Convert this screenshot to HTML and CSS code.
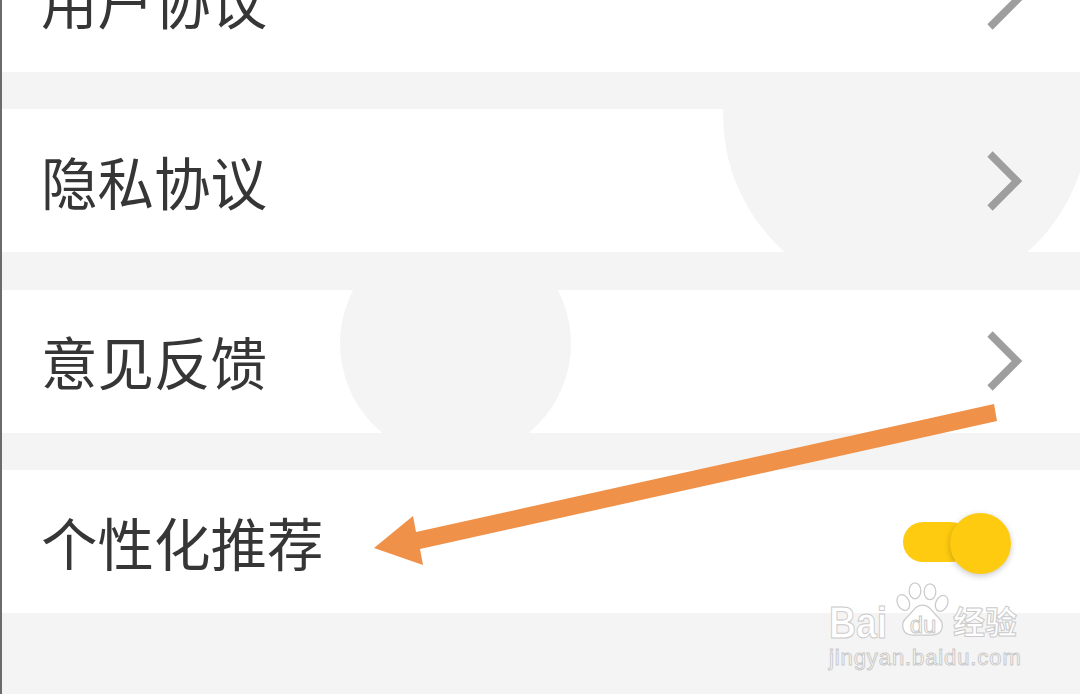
FILE: index.html
```html
<!DOCTYPE html>
<html lang="zh-CN">
<head>
<meta charset="utf-8">
<title>设置</title>
<link rel="stylesheet" href="styles.css">
</head>
<body>
<main class="page">
  <div class="list">
    <section class="row">
      <span class="label">用户协议</span>
      <svg class="chevron" viewBox="0 0 40 60"><path d="M4 3 L31 30 L4 57"/></svg>
    </section>
    <section class="row">
      <i class="blob blob-large"></i>
      <span class="label">隐私协议</span>
      <svg class="chevron" viewBox="0 0 40 60"><path d="M4 3 L31 30 L4 57"/></svg>
    </section>
    <section class="row">
      <i class="blob blob-small"></i>
      <span class="label">意见反馈</span>
      <svg class="chevron" viewBox="0 0 40 60"><path d="M4 3 L31 30 L4 57"/></svg>
    </section>
    <section class="row">
      <span class="label">个性化推荐</span>
      <div class="toggle"><i class="knob"></i></div>
    </section>
  </div>

  <svg class="arrow" viewBox="0 0 1080 694">
    <polygon points="994,404 997,421 420,549 423,565 374,548 413,516 416,532"/>
  </svg>

  <div class="watermark">
    <div class="wm-top">
      <span class="wm-bai">Bai</span>
      <span class="wm-paw">
        <svg viewBox="0 0 66 66">
          <ellipse cx="10" cy="24" rx="7" ry="10" transform="rotate(-25 10 24)"/>
          <ellipse cx="24" cy="10" rx="7" ry="9.500"/>
          <ellipse cx="42" cy="11" rx="7" ry="9.500"/>
          <ellipse cx="56" cy="25" rx="7" ry="10" transform="rotate(25 56 25)"/>
          <path d="M33 27 C24 27 21 36 14 42 C6 49 8 63 21 63 L45 63 C58 63 60 49 52 42 C45 36 42 27 33 27 Z"/>
        </svg>
        <span class="wm-du">du</span>
      </span>
      <span class="wm-cn">经验</span>
    </div>
    <div class="wm-url">jingyan.baidu.com</div>
  </div>
</main>
</body>
</html>
```
FILE: styles.css
```css
* { box-sizing: border-box; }
html, body { margin: 0; padding: 0; }
body { width: 1080px; height: 694px; overflow: hidden; background: #f4f4f4; }

.page {
  position: relative;
  width: 1080px;
  height: 694px;
  overflow: hidden;
  font-family: "Noto Sans CJK SC", "Noto Sans", sans-serif;
  background: #f4f4f4;
}
.page::before {
  content: "";
  position: absolute;
  left: 0;
  top: 0;
  bottom: 0;
  width: 2px;
  background: #6b6b6b;
  z-index: 3;
}

.list { display: flex; flex-direction: column; gap: 37.500px; margin-top: -71.500px; }

.row {
  position: relative;
  display: flex;
  align-items: center;
  justify-content: space-between;
  height: 143px;
  padding: 0 54px 0 41px;
  background: #fff;
  overflow: hidden;
}

.label {
  position: relative;
  margin-bottom: 2px;
  font-size: 56.500px;
  line-height: 72px;
  color: #363636;
}

.chevron {
  position: relative;
  width: 40px;
  height: 60px;
  fill: none;
  stroke: #9e9e9e;
  stroke-width: 7.500;
}

.blob { position: absolute; border-radius: 50%; background: #f4f4f4; }
.blob-large { left: 723px; top: -177px; width: 366px; height: 366px; }
.blob-small { left: 340px; top: -62px; width: 231px; height: 231px; }

.toggle {
  position: relative;
  width: 68px;
  height: 40px;
  margin-right: 55px;
  border-radius: 20px;
  background: #fecb10;
}
.knob {
  position: absolute;
  right: -40px;
  top: -9px;
  width: 61px;
  height: 61px;
  border-radius: 50%;
  background: #fecb10;
  box-shadow: 0 2px 6px rgba(0, 0, 0, 0.22);
}

.arrow { position: absolute; left: 0; top: 0; width: 1080px; height: 694px; fill: #ef9149; }

.watermark {
  position: absolute;
  left: 829px;
  top: 578px;
  width: 196px;
  font-family: "Liberation Sans", sans-serif;
  color: #fff;
  -webkit-text-stroke: 1px #cacaca;
}
.wm-top { display: flex; align-items: flex-end; height: 64px; }
.wm-bai {
  width: 66px;
  margin-bottom: -3px;
  font-size: 44px;
  line-height: 44px;
  font-weight: 700;
  transform: scaleX(0.85);
  transform-origin: left center;
}
.wm-paw { position: relative; width: 55px; height: 60px; margin-bottom: 2px; }
.wm-paw svg { display: block; width: 55px; height: 60px; fill: #fff; stroke: #cacaca; stroke-width: 1.500; }
.wm-du {
  position: absolute;
  left: 12px;
  bottom: 1px;
  width: 32px;
  text-align: center;
  font-size: 24px;
  line-height: 28px;
}
.wm-cn {
  font-family: "Noto Sans CJK SC", sans-serif;
  font-size: 32px;
  line-height: 36px;
  font-weight: 700;
  margin: 0 0 4px 3px;
  white-space: nowrap;
}
.wm-url {
  font-size: 22px;
  line-height: 26px;
  margin-top: 3px;
  letter-spacing: 0.900px;
  white-space: nowrap;
}
```
